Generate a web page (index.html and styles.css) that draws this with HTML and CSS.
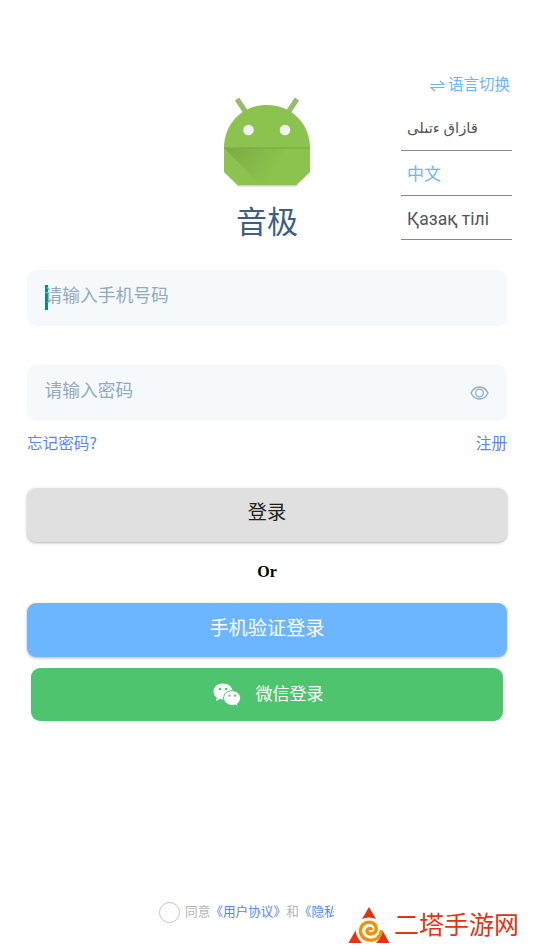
FILE: index.html
```html
<!DOCTYPE html>
<html lang="zh-CN">
<head>
<meta charset="utf-8">
<title>音极</title>
<link rel="stylesheet" href="styles.css">
</head>
<body>
<main class="screen">
  <header class="hero">
    <div class="brand">
      <svg class="robot" width="92" height="96" viewBox="0 0 92 96">
        <defs>
          <linearGradient id="fold" gradientUnits="userSpaceOnUse" x1="10" y1="53" x2="50" y2="79">
            <stop offset="0" stop-color="#7bad43"/>
            <stop offset="1" stop-color="#8bc34e"/>
          </linearGradient>
          <clipPath id="body"><path d="M3 52H89V75L75 88.500H17L3 75Z"/></clipPath>
        </defs>
        <path d="M3 76L17 90.500H75L89 76" fill="#cfcfcf"/>
        <path d="M16 3L26 18M76 3L66 18" stroke="#94bd6c" stroke-width="5.200" fill="none"/>
        <path d="M3 52C3 27 22 9 46 9S89 27 89 52V76L75 89H17L3 76Z" fill="#8bc34e"/>
        <path d="M3 52H89V60L60 89H40Z" fill="url(#fold)" clip-path="url(#body)"/>
        <path d="M3 52H89" stroke="#7baf45" stroke-width="1.500"/>
        <circle cx="27.500" cy="34" r="5.300" fill="#f1f1f1"/>
        <circle cx="64" cy="34" r="5.300" fill="#f1f1f1"/>
      </svg>
      <h1 class="title">音极</h1>
    </div>
    <nav class="languages">
      <div class="switch">
        <svg width="15" height="12" viewBox="0 0 15 12" fill="none" stroke="#6cb5ff" stroke-width="1.200"><path d="M.5 4.500H14L10 1M14.500 7.500H1L5 11"/></svg>
        <span>语言切换</span>
      </div>
      <div class="language arabic"><span dir="rtl">قازاق ءتىلى</span></div>
      <div class="language current"><span>中文</span></div>
      <div class="language cyrillic"><span>Қазақ тілі</span></div>
    </nav>
  </header>

  <section class="form">
    <div class="field"><i class="caret"></i><span>请输入手机号码</span></div>
    <div class="field password">
      <span>请输入密码</span>
      <svg class="eye" width="19" height="14" viewBox="0 0 19 14" fill="none" stroke="#91a9be" stroke-width="1.300"><path d="M1 7C3 3 6 1 9.500 1S16 3 18 7C16 11 13 13 9.500 13S3 11 1 7Z"/><circle cx="9.500" cy="7" r="3.800"/></svg>
    </div>
    <div class="links"><a>忘记密码?</a><a>注册</a></div>
    <div class="button login">登录</div>
    <div class="or">Or</div>
    <div class="button phone">手机验证登录</div>
    <div class="wechat">
      <svg width="28" height="24" viewBox="0 0 28 24">
        <path d="M10 .5C4.500.5.5 4 .5 8.500c0 2.500 1.300 4.700 3.300 6.200L3 18l3.500-1.900c1 .3 2.200.5 3.500.5 5.500 0 9.500-3.500 9.500-8.100S15.500.5 10 .5Z" fill="#fff"/>
        <path d="M19.300 7.700c-5 0-8.700 3.200-8.700 7.300s3.700 7.400 8.700 7.400c1 0 2-.1 2.900-.4l3 1.600-.8-2.700c2-1.400 3.100-3.500 3.100-5.900 0-4.100-3.500-7.300-8.200-7.300Z" fill="#fff" stroke="#4ec46f" stroke-width="1"/>
        <g fill="#4ec46f"><circle cx="7" cy="6" r="1.300"/><circle cx="13.200" cy="6" r="1.300"/><circle cx="16.500" cy="12.700" r="1.100"/><circle cx="22" cy="12.700" r="1.100"/></g>
      </svg>
      <span>微信登录</span>
    </div>
  </section>

  <footer class="footer">
    <div class="consent">
      <i class="radio"></i>
      <p class="terms">同意<a>《用户协议》</a>和<a>《隐私</a></p>
    </div>
    <div class="site">
      <svg width="42" height="38" viewBox="0 0 42 38">
        <g fill="#e53212"><path d="M21 1L28 13Q21 10 14 13Z"/><path d="M7.500 24.500Q8.500 32 14 37H.5Z"/><path d="M34.500 24.500L41.500 37H28Q33.500 32 34.500 24.500Z"/></g>
        <path d="M23.300 22.800C20.500 21.500 18 24 19.500 26.500C21.500 29.500 28.500 27.500 28.300 22.500C28 17.500 22.500 14.800 18 16.800C12.500 19 11 25 14 30C17.500 35 25 35.500 29.500 32C32 30 33 28 33 25.500" fill="none" stroke="#f29100" stroke-width="3.300" stroke-linecap="round"/>
      </svg>
      <span>二塔手游网</span>
    </div>
  </footer>
</main>
</body>
</html>
```
FILE: styles.css
```css
* { box-sizing: border-box; }
body { margin: 0; background: #fff; font-family: "Noto Sans CJK SC", sans-serif; }
.screen { width: 534px; height: 950px; display: flex; flex-direction: column; overflow: hidden; }

.hero { height: 270px; display: grid; grid-template-columns: 1fr 92px 1fr; padding-right: 22px; padding-left: 22px; }
.brand { grid-column: 2; padding-top: 96px; display: flex; flex-direction: column; align-items: center; }
.robot { display: block; flex: none; }
.title { margin: 5px 0 0; font-size: 31px; font-weight: 400; line-height: 46px; color: #3e5f82; white-space: nowrap; }
.languages { justify-self: end; width: 111px; padding-top: 69px; }
.switch { height: 28px; display: flex; justify-content: flex-end; align-items: center; gap: 3px; padding-right: 2px; font-size: 15.500px; line-height: 28px; color: #6cb5ff; }
.switch svg { margin-top: 5px; }
.language { height: 44.500px; display: flex; align-items: center; padding-left: 6px; border-bottom: 1px solid #878787; color: #555; line-height: 30px; }
.arabic { height: 54px; padding-top: 7px; font-family: "Noto Sans", "DejaVu Sans", sans-serif; font-size: 14.800px; }
.current { color: #6cb5ff; font-size: 17px; }
.cyrillic { padding-top: 3px; font-family: Roboto, sans-serif; font-size: 17.500px; }

.form { display: flex; flex-direction: column; padding: 0 27px; }
.field { height: 56px; display: flex; align-items: flex-start; padding: 10px 18px 0 17.500px; border-radius: 9px; background: #f5f9fc; color: #91a9be; font-size: 17.750px; line-height: 28px; }
.caret { width: 3px; height: 25px; margin: 5px -3px 0 0; background: #009080; }
.password { margin-top: 39px; justify-content: space-between; }
.eye { margin-top: 11px; }
.links { display: flex; justify-content: space-between; margin-top: 8px; font-size: 15.600px; line-height: 26px; color: #5386ff; }
.button { height: 54px; border-radius: 9px; text-align: center; font-size: 19.200px; line-height: 46px; box-shadow: 0 1px 3px rgba(0, 0, 0, .3); }
.login { margin-top: 33px; background: #e0e0e0; color: #212121; }
.or { height: 61px; text-align: center; font: bold 16px/60px "Liberation Serif", serif; color: #000; }
.phone { background: #6cb5ff; color: #fff; line-height: 48px; }
.wechat { height: 53px; margin: 11px 4px 0; display: flex; justify-content: center; gap: 15px; padding: 12px 0 0 2px; border-radius: 9px; background: #4ec46f; color: #fff; font-size: 17px; line-height: 26px; }
.wechat svg { margin-top: 3px; }

.footer { margin-top: auto; height: 50px; display: flex; align-items: flex-start; padding-left: 159px; }
.consent { width: 175px; display: flex; gap: 5px; padding-top: 2px; overflow: hidden; }
.radio { flex: none; width: 21px; height: 21px; border: 1px solid #c4c4c4; border-radius: 50%; }
.terms { margin: 0; font-size: 12.650px; line-height: 18px; color: #b5b5b5; white-space: nowrap; }
.terms a { color: #5386ff; }
.site { display: flex; align-items: flex-start; gap: 4px; margin: 6px 0 0 14px; color: #e53212; font-size: 25px; line-height: 34px; white-space: nowrap; }
```
